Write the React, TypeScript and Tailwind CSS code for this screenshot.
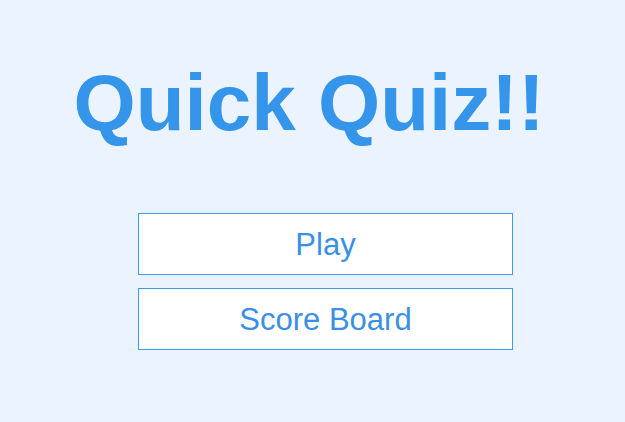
export default function App() {
  return (
    <div className="w-[625px] h-[422px] overflow-hidden bg-[#ebf4fe] font-['Liberation_Sans',Arial,sans-serif]">
      <h1 className="pt-[63px] text-center text-[80px] leading-[80px] font-bold text-[#3495ea] pr-[7px]">
        Quick Quiz!!
      </h1>

      <div className="mt-[70px] ml-[138px] w-[375px] flex flex-col gap-[13px]">
        <button className="h-[62px] bg-white border border-[#3a9bef] text-[#3a8fe6] text-[31px] leading-none">
          Play
        </button>
        <button className="h-[62px] bg-white border border-[#3a9bef] text-[#3a8fe6] text-[31px] leading-none">
          Score Board
        </button>
      </div>
    </div>
  );
}
